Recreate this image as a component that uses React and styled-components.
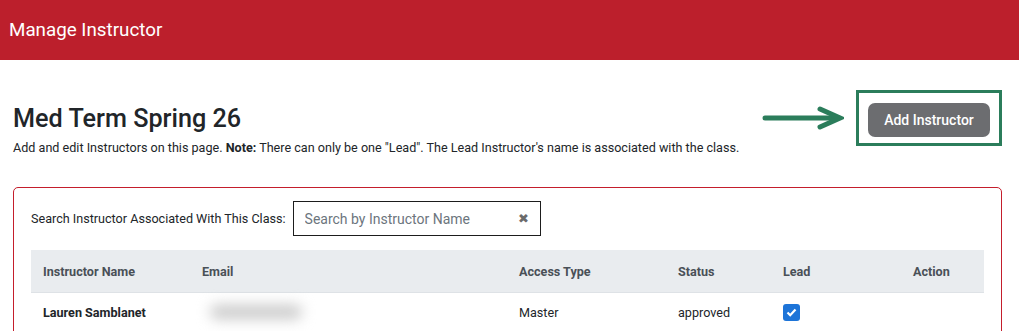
import React from 'react';
import styled, { createGlobalStyle } from 'styled-components';

const GlobalStyle = createGlobalStyle`
  body {
    margin: 0;
    font-family: Roboto, "Liberation Sans", Arial, sans-serif;
    color: #212529;
    background: #fff;
    overflow: hidden;
  }
`;

const TopBar = styled.header`
  height: 60px;
  background: #bc1f2c;
  display: flex;
  align-items: center;
  padding-left: 9px;
`;

const TopTitle = styled.h1`
  margin: 0;
  font-size: 18.8px;
  font-weight: 400;
  color: #fff;
`;

const Main = styled.main`
  padding: 30px 17px 0 13px;
`;

const IntroRow = styled.div`
  display: flex;
  justify-content: space-between;
  align-items: flex-start;
`;

const Intro = styled.div`
  padding-top: 14px;
`;

const Title = styled.h2`
  margin: 0 0 5px;
  font-size: 25.2px;
  font-weight: 500;
  line-height: 30px;
  color: #212529;
`;

const Lead = styled.p`
  margin: 0;
  font-size: 12.6px;
  line-height: 18px;
  color: #212529;

  b {
    font-weight: 700;
  }
`;

const Callout = styled.div`
  display: flex;
  align-items: center;
  gap: 12px;
`;

const Highlight = styled.div`
  border: 3px solid #2b7d5b;
  padding: 10px 9px 6px;
`;

const AddButton = styled.button`
  width: 122px;
  height: 34px;
  border: none;
  border-radius: 7px;
  background: #6c6d70;
  color: #fff;
  font-family: inherit;
  font-size: 14px;
  font-weight: 500;
  cursor: pointer;
`;

const Card = styled.section`
  margin-top: 30px;
  border: 1px solid #c41e2c;
  border-radius: 5px;
  padding: 13px 17px 20px 17px;
`;

const SearchRow = styled.div`
  display: flex;
  align-items: center;
  gap: 7px;
  margin-bottom: 14px;
`;

const SearchLabel = styled.label`
  font-size: 12.6px;
  color: #212529;
`;

const SearchBox = styled.div`
  width: 248px;
  height: 35px;
  box-sizing: border-box;
  border: 1.5px solid #1d1d1d;
  display: flex;
  align-items: center;
  justify-content: space-between;
  padding: 0 11px 0 11px;
`;

const SearchInput = styled.input`
  border: none;
  outline: none;
  font-family: inherit;
  font-size: 14px;
  color: #212529;
  width: 190px;
  padding: 0;

  &::placeholder {
    color: #6c757d;
  }
`;

const Clear = styled.span`
  font-size: 13px;
  color: #6b6b6b;
`;

const cols = '159px 317px 159px 105px 130px 1fr';

const HeadRow = styled.div`
  display: grid;
  grid-template-columns: ${cols};
  height: 42px;
  align-items: center;
  background: #e9ecef;
  border-bottom: 1px solid #dee2e6;
`;

const HeadCell = styled.div`
  padding-left: 12px;
  font-size: 12.6px;
  font-weight: 700;
  color: #495057;
`;

const BodyRow = styled.div`
  display: grid;
  grid-template-columns: ${cols};
  height: 38px;
  align-items: center;
`;

const Cell = styled.div`
  padding-left: 12px;
  font-size: 12.6px;
  font-weight: ${p => (p.$strong ? 700 : 400)};
  color: #212529;
`;

const Blurred = styled.div`
  width: 92px;
  height: 14px;
  margin-left: 8px;
  background: #c9c9c9;
  border-radius: 7px;
  filter: blur(7px);
`;

const Check = styled.span`
  display: inline-flex;
  align-items: center;
  justify-content: center;
  width: 17px;
  height: 17px;
  border-radius: 3px;
  background: #1d74d8;
`;

const Arrow = () => (
  <svg width="82" height="24" viewBox="0 0 82 24">
    <path d="M3 12 H74" stroke="#2b7d5b" strokeWidth="5" strokeLinecap="round" fill="none" />
    <path d="M58 3 L78 12 L58 21" stroke="#2b7d5b" strokeWidth="5" strokeLinecap="round" strokeLinejoin="miter" fill="none" />
  </svg>
);

const instructors = [
  { name: 'Lauren Samblanet', access: 'Master', status: 'approved', lead: true },
];

export default function App() {
  return (
    <>
      <GlobalStyle />
      <TopBar>
        <TopTitle>Manage Instructor</TopTitle>
      </TopBar>
      <Main>
        <IntroRow>
          <Intro>
            <Title>Med Term Spring 26</Title>
            <Lead>
              Add and edit Instructors on this page. <b>Note:</b> There can only be one "Lead". The Lead Instructor's name is associated with the class.
            </Lead>
          </Intro>
          <Callout>
            <Arrow />
            <Highlight>
              <AddButton>Add Instructor</AddButton>
            </Highlight>
          </Callout>
        </IntroRow>

        <Card>
          <SearchRow>
            <SearchLabel>Search Instructor Associated With This Class:</SearchLabel>
            <SearchBox>
              <SearchInput placeholder="Search by Instructor Name" />
              <Clear>✖</Clear>
            </SearchBox>
          </SearchRow>
          <HeadRow>
            <HeadCell>Instructor Name</HeadCell>
            <HeadCell>Email</HeadCell>
            <HeadCell>Access Type</HeadCell>
            <HeadCell>Status</HeadCell>
            <HeadCell>Lead</HeadCell>
            <HeadCell>Action</HeadCell>
          </HeadRow>
          {instructors.map(i => (
            <BodyRow key={i.name}>
              <Cell $strong>{i.name}</Cell>
              <Cell><Blurred /></Cell>
              <Cell>{i.access}</Cell>
              <Cell>{i.status}</Cell>
              <Cell>
                {i.lead && (
                  <Check>
                    <svg width="11" height="9" viewBox="0 0 11 9">
                      <path d="M1.5 4.5 L4.2 7.2 L9.5 1.5" stroke="#fff" strokeWidth="2.2" fill="none" />
                    </svg>
                  </Check>
                )}
              </Cell>
              <Cell />
            </BodyRow>
          ))}
        </Card>
      </Main>
    </>
  );
}
